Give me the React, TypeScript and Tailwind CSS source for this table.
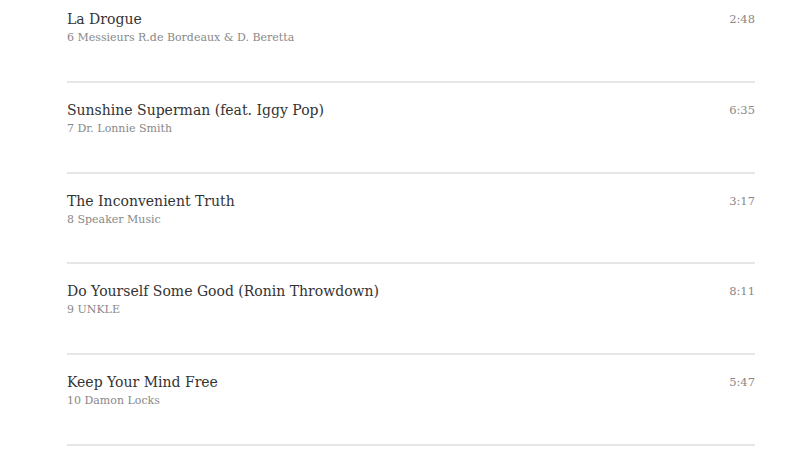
const tracks = [
  { title: 'La Drogue', artist: '6 Messieurs R.de Bordeaux & D. Beretta', time: '2:48' },
  { title: 'Sunshine Superman (feat. Iggy Pop)', artist: '7 Dr. Lonnie Smith', time: '6:35' },
  { title: 'The Inconvenient Truth', artist: '8 Speaker Music', time: '3:17' },
  { title: 'Do Yourself Some Good (Ronin Throwdown)', artist: '9 UNKLE', time: '8:11' },
  { title: 'Keep Your Mind Free', artist: '10 Damon Locks', time: '5:47' },
]

export default function App() {
  return (
    <div className="w-[794px] h-[450px] overflow-hidden bg-white font-['DejaVu_Serif',Georgia,serif]">
      <div className="-mt-[8px] px-[67px] pr-[39px]">
        {tracks.map((t) => (
          <div
            key={t.title}
            className="h-[90.75px] border-b-2 border-[#e6e6e6] flex items-start justify-between pt-[17px]"
          >
            <div className="flex flex-col">
              <span className="text-[14px] leading-[20px] text-[#333]">{t.title}</span>
              <span className="text-[11px] leading-[18px] text-[#888]">{t.artist}</span>
            </div>
            <span className="text-[11.5px] leading-[20px] text-[#888]">{t.time}</span>
          </div>
        ))}
      </div>
    </div>
  )
}
